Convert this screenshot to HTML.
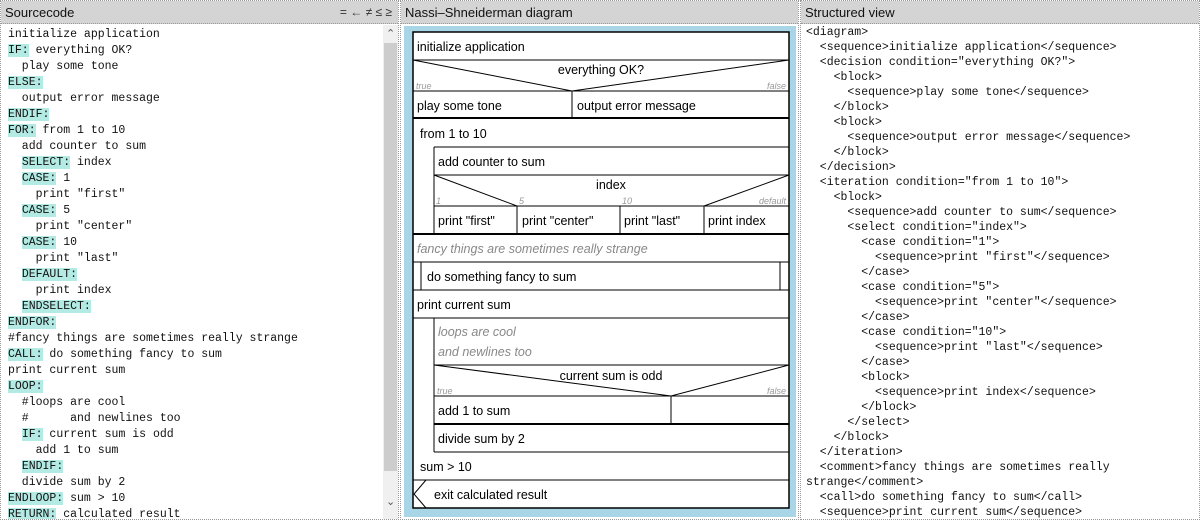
<!DOCTYPE html>
<html><head><meta charset="utf-8"><style>
*{margin:0;padding:0;box-sizing:border-box}
body{width:1200px;height:520px;overflow:hidden;background:#fff;font-family:"Liberation Sans",sans-serif;position:relative}
.panel{position:absolute;top:0;height:520px;border:1px dotted #999;background:#fff;overflow:hidden}
.hdr{position:absolute;left:0;right:0;top:0;height:23px;background:#d4d4d4;border-bottom:1px dotted #999;font-size:13px;line-height:23px;padding-left:4px;color:#111}
.code{position:absolute;left:7px;top:26px;font-family:"Liberation Mono",monospace;font-size:11.5px;line-height:16px;white-space:pre;color:#111}
.k{background:#b3ebe4}
.xml{position:absolute;left:5px;top:24px;font-family:"Liberation Mono",monospace;font-size:11.5px;line-height:15px;white-space:pre;color:#111}
</style></head><body>
<div class="panel" style="left:0;width:399px">
<div class="hdr">Sourcecode<span style="position:absolute;right:6px;font-size:12px;color:#333">= ← ≠ ≤ ≥</span></div>
<div class="code">initialize application
<span class="k">IF:</span> everything OK?
  play some tone
<span class="k">ELSE:</span>
  output error message
<span class="k">ENDIF:</span>
<span class="k">FOR:</span> from 1 to 10
  add counter to sum
  <span class="k">SELECT:</span> index
  <span class="k">CASE:</span> 1
    print "first"
  <span class="k">CASE:</span> 5
    print "center"
  <span class="k">CASE:</span> 10
    print "last"
  <span class="k">DEFAULT:</span>
    print index
  <span class="k">ENDSELECT:</span>
<span class="k">ENDFOR:</span>
#fancy things are sometimes really strange
<span class="k">CALL:</span> do something fancy to sum
print current sum
<span class="k">LOOP:</span>
  #loops are cool
  #      and newlines too
  <span class="k">IF:</span> current sum is odd
    add 1 to sum
  <span class="k">ENDIF:</span>
  divide sum by 2
<span class="k">ENDLOOP:</span> sum &gt; 10
<span class="k">RETURN:</span> calculated result</div>
<div style="position:absolute;left:382px;top:24px;width:15px;height:494px;background:#f0f0f0"></div>
<div style="position:absolute;left:383px;top:42px;width:13px;height:428px;background:#cdcdcd"></div>
<div style="position:absolute;left:385px;top:26px;font-size:11px;color:#555">&#x2303;</div>
<div style="position:absolute;left:385px;top:494px;font-size:11px;color:#555">&#x2304;</div>
</div>

<div class="panel" style="left:400px;width:399px">
<div class="hdr">Nassi–Shneiderman diagram</div>
<div style="position:absolute;left:3px;top:25px;width:392px;height:491px;background:#a9d6e6"></div>
<svg style="position:absolute;left:0;top:0" width="399" height="520" font-family="Liberation Sans, sans-serif" font-size="12.5">
<g transform="translate(-400,0)">
<rect x="412" y="31" width="376" height="476" fill="#fff" stroke="#000" stroke-width="1.5"/>
<g stroke="#000" stroke-width="1" fill="none">
<line x1="412" y1="59" x2="788" y2="59"/>
<polyline points="412,59 571,90 788,59"/>
<line x1="412" y1="90" x2="788" y2="90"/>
<line x1="571" y1="90" x2="571" y2="117"/>
<line x1="412" y1="117" x2="788" y2="117" stroke-width="2"/>
<line x1="433" y1="146" x2="433" y2="233"/>
<line x1="433" y1="146" x2="788" y2="146"/>
<line x1="433" y1="174" x2="788" y2="174"/>
<polyline points="433,174 516,205"/>
<polyline points="703,205 788,174"/>
<line x1="433" y1="205" x2="788" y2="205"/>
<line x1="516" y1="205" x2="516" y2="233"/>
<line x1="619" y1="205" x2="619" y2="233"/>
<line x1="703" y1="205" x2="703" y2="233"/>
<line x1="412" y1="233" x2="788" y2="233" stroke-width="2"/>
<line x1="412" y1="261" x2="788" y2="261"/>
<line x1="420" y1="261" x2="420" y2="289"/>
<line x1="779" y1="261" x2="779" y2="289"/>
<line x1="412" y1="289" x2="788" y2="289"/>
<line x1="412" y1="317" x2="788" y2="317"/>
<line x1="433" y1="317" x2="433" y2="451"/>
<line x1="433" y1="364" x2="788" y2="364"/>
<polyline points="433,364 670,395 788,364"/>
<line x1="433" y1="395" x2="788" y2="395"/>
<line x1="670" y1="395" x2="670" y2="423"/>
<line x1="433" y1="423" x2="788" y2="423" stroke-width="2"/>
<line x1="433" y1="451" x2="788" y2="451"/>
<line x1="412" y1="479" x2="788" y2="479"/>
<polyline points="425,479 413,493 425,507"/>
</g>
<g fill="#000">
<text x="416" y="50">initialize application</text>
<text x="600" y="73" text-anchor="middle">everything OK?</text>
<text x="416" y="109">play some tone</text>
<text x="576" y="109">output error message</text>
<text x="419" y="137">from 1 to 10</text>
<text x="437" y="165">add counter to sum</text>
<text x="610" y="188" text-anchor="middle">index</text>
<text x="437" y="224">print "first"</text>
<text x="521" y="224">print "center"</text>
<text x="623" y="224">print "last"</text>
<text x="707" y="224">print index</text>
<text x="426" y="280">do something fancy to sum</text>
<text x="416" y="308">print current sum</text>
<text x="610" y="379" text-anchor="middle">current sum is odd</text>
<text x="437" y="414">add 1 to sum</text>
<text x="437" y="442">divide sum by 2</text>
<text x="419" y="470">sum &gt; 10</text>
<text x="433" y="498">exit calculated result</text>
</g>
<g fill="#888" font-style="italic">
<text x="416" y="252">fancy things are sometimes really strange</text>
<text x="437" y="335">loops are cool</text>
<text x="437" y="355">and newlines too</text>
</g>
<g fill="#999" font-style="italic" font-size="9">
<text x="415" y="88">true</text>
<text x="785" y="88" text-anchor="end">false</text>
<text x="435" y="203">1</text>
<text x="518" y="203">5</text>
<text x="621" y="203">10</text>
<text x="785" y="203" text-anchor="end">default</text>
<text x="436" y="393">true</text>
<text x="785" y="393" text-anchor="end">false</text>
</g>
</g></svg>
</div>

<div class="panel" style="left:800px;width:400px">
<div class="hdr">Structured view</div>
<div class="xml">&lt;diagram&gt;
  &lt;sequence&gt;initialize application&lt;/sequence&gt;
  &lt;decision condition="everything OK?"&gt;
    &lt;block&gt;
      &lt;sequence&gt;play some tone&lt;/sequence&gt;
    &lt;/block&gt;
    &lt;block&gt;
      &lt;sequence&gt;output error message&lt;/sequence&gt;
    &lt;/block&gt;
  &lt;/decision&gt;
  &lt;iteration condition="from 1 to 10"&gt;
    &lt;block&gt;
      &lt;sequence&gt;add counter to sum&lt;/sequence&gt;
      &lt;select condition="index"&gt;
        &lt;case condition="1"&gt;
          &lt;sequence&gt;print "first"&lt;/sequence&gt;
        &lt;/case&gt;
        &lt;case condition="5"&gt;
          &lt;sequence&gt;print "center"&lt;/sequence&gt;
        &lt;/case&gt;
        &lt;case condition="10"&gt;
          &lt;sequence&gt;print "last"&lt;/sequence&gt;
        &lt;/case&gt;
        &lt;block&gt;
          &lt;sequence&gt;print index&lt;/sequence&gt;
        &lt;/block&gt;
      &lt;/select&gt;
    &lt;/block&gt;
  &lt;/iteration&gt;
  &lt;comment&gt;fancy things are sometimes really
strange&lt;/comment&gt;
  &lt;call&gt;do something fancy to sum&lt;/call&gt;
  &lt;sequence&gt;print current sum&lt;/sequence&gt;</div>
</div>
</body></html>
